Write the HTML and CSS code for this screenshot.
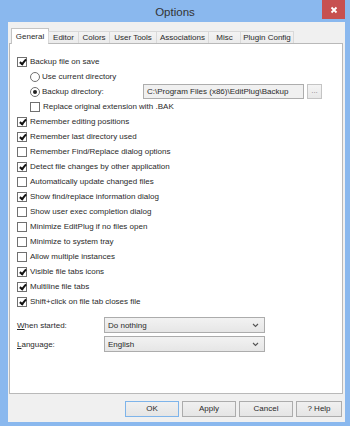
FILE: index.html
```html
<!DOCTYPE html>
<html lang="en">
<head>
  <meta charset="UTF-8" />
  <title>Options</title>
  <link rel="stylesheet" href="styles.css">
</head>
<body>
  <div class="window">
    <div class="titlebar">
      <span></span>
      <span class="title">Options</span>
      <span class="close">
        <svg width="8" height="8" viewBox="0 0 8 8"><path d="M1.5 1.5l5 5M6.5 1.5l-5 5" stroke="#fff" stroke-width="1.8"/></svg>
      </span>
    </div>

    <div class="client">
      <div class="tabs">
        <div class="tab active w-general">General</div>
        <div class="tab w-editor">Editor</div>
        <div class="tab w-colors">Colors</div>
        <div class="tab w-tools">User Tools</div>
        <div class="tab w-assoc">Associations</div>
        <div class="tab w-misc">Misc</div>
        <div class="tab w-plugin">Plugin Config</div>
      </div>

      <div class="panel">
        <div class="row"><span class="check on"></span>Backup file on save</div>
        <div class="row indent"><span class="radio"></span>Use current directory</div>
        <div class="row indent">
          <span class="radio on"></span>
          <span class="dir-label">Backup directory:</span>
          <span class="textbox">C:\Program Files (x86)\EditPlug\Backup</span>
          <span class="browse">...</span>
        </div>
        <div class="row indent"><span class="check"></span>Replace original extension with .BAK</div>
        <div class="row"><span class="check on"></span>Remember editing positions</div>
        <div class="row"><span class="check on"></span>Remember last directory used</div>
        <div class="row"><span class="check"></span>Remember Find/Replace dialog options</div>
        <div class="row"><span class="check on"></span>Detect file changes by other application</div>
        <div class="row"><span class="check"></span>Automatically update changed files</div>
        <div class="row"><span class="check on"></span>Show find/replace information dialog</div>
        <div class="row"><span class="check"></span>Show user exec completion dialog</div>
        <div class="row"><span class="check"></span>Minimize EditPlug if no files open</div>
        <div class="row"><span class="check"></span>Minimize to system tray</div>
        <div class="row"><span class="check"></span>Allow multiple instances</div>
        <div class="row"><span class="check on"></span>Visible file tabs icons</div>
        <div class="row"><span class="check on"></span>Multiline file tabs</div>
        <div class="row"><span class="check on"></span>Shift+click on file tab closes file</div>

        <div class="fields">
          <div class="field">
            <span class="field-label"><u>W</u>hen started:</span>
            <span class="combo">Do nothing
              <svg width="7" height="5" viewBox="0 0 7 5"><path d="M1 1l2.5 2.5L6 1" stroke="#555" stroke-width="1.1" fill="none"/></svg>
            </span>
          </div>
          <div class="field">
            <span class="field-label"><u>L</u>anguage:</span>
            <span class="combo">English
              <svg width="7" height="5" viewBox="0 0 7 5"><path d="M1 1l2.5 2.5L6 1" stroke="#555" stroke-width="1.1" fill="none"/></svg>
            </span>
          </div>
        </div>
      </div>

      <div class="buttons">
        <span class="btn default">OK</span>
        <span class="btn">Apply</span>
        <span class="btn">Cancel</span>
        <span class="btn help">? Help</span>
      </div>
    </div>
  </div>
</body>
</html>
```

FILE: styles.css
```css
body {
  margin: 0;
  font-family: "Liberation Sans", Arial, sans-serif;
  font-size: 8px;
  color: #2a2a2a;
}
.window {
  width: 350px;
  height: 426px;
  background-color: #8ab8ee;
  display: flex;
  flex-direction: column;
}
.titlebar {
  height: 22px;
  display: grid;
  grid-template-columns: 1fr auto 1fr;
  align-items: start;
}
.title {
  font-size: 11.5px;
  color: #333;
  line-height: 24px;
}
.close {
  justify-self: end;
  margin-right: 5px;
  width: 23px;
  height: 19px;
  background-color: #c75050;
  display: flex;
  align-items: center;
  justify-content: center;
}
.client {
  flex: 1;
  margin: 0 5px 4px 8px;
  background-color: #f0f0f0;
  padding: 6px 2px 0 1px;
  display: flex;
  flex-direction: column;
}

/* tabs */
.tabs {
  display: flex;
  align-items: flex-end;
  height: 15px;
  padding-left: 2px;
  position: relative;
  z-index: 1;
}
.tab {
  box-sizing: border-box;
  height: 12px;
  margin-left: -1px;
  border: 1px solid #d9d9d9;
  border-bottom: none;
  background: linear-gradient(#f3f3f3, #ebebeb);
  text-align: center;
  line-height: 12px;
}
.tab:first-child {
  margin-left: 0;
}
.tab.active {
  height: 16px;
  margin-bottom: -1px;
  background: #fff;
  border-color: #c4c4c4;
  line-height: 15px;
}
.w-general { width: 38px; }
.w-editor { width: 31px; }
.w-colors { width: 32px; }
.w-tools { width: 48px; }
.w-assoc { width: 53px; }
.w-misc { width: 33px; }
.w-plugin { width: 54px; }

/* panel */
.panel {
  box-sizing: border-box;
  height: 351px;
  border: 1px solid #b9b9b9;
  background-color: #fff;
  padding: 10px 0 0 7px;
}
.row {
  display: flex;
  align-items: center;
  height: 15px;
  white-space: nowrap;
}
.indent {
  padding-left: 13px;
}
.check,
.radio {
  box-sizing: border-box;
  width: 10px;
  height: 10px;
  margin-right: 3px;
  border: 1px solid #707070;
  background-color: #fff;
  position: relative;
  flex: none;
}
.radio {
  border-radius: 50%;
  margin-right: 2px;
}
.check.on::after {
  content: "";
  position: absolute;
  left: 2.5px;
  top: 0px;
  width: 2px;
  height: 5px;
  border-right: 2px solid #111;
  border-bottom: 2px solid #111;
  transform: rotate(40deg);
}
.radio.on::after {
  content: "";
  position: absolute;
  left: 2px;
  top: 2px;
  width: 4px;
  height: 4px;
  border-radius: 50%;
  background-color: #222;
}
.dir-label {
  width: 101px;
}
.textbox {
  box-sizing: border-box;
  width: 161px;
  height: 15px;
  border: 1px solid #adadad;
  background-color: #f0f0f0;
  padding-left: 3px;
  line-height: 13px;
}
.browse {
  box-sizing: border-box;
  width: 15px;
  height: 15px;
  margin-left: 3px;
  border: 1px solid #c4c4c4;
  background: linear-gradient(#f4f4f4, #e8e8e8);
  color: #888;
  text-align: center;
  line-height: 12px;
}
.fields {
  margin-top: 8px;
  display: flex;
  flex-direction: column;
  gap: 3px;
}
.field {
  display: flex;
  align-items: center;
  height: 16px;
}
.field-label {
  width: 87px;
}
.combo {
  box-sizing: border-box;
  width: 161px;
  height: 16px;
  border: 1px solid #acacac;
  background: linear-gradient(#f2f2f2, #e6e6e6);
  padding: 0 5px 0 3px;
  display: flex;
  align-items: center;
  justify-content: space-between;
}

/* buttons */
.buttons {
  display: flex;
  justify-content: flex-end;
  gap: 3px;
  margin-top: 7px;
  padding-right: 1px;
}
.btn {
  box-sizing: border-box;
  width: 54px;
  height: 16px;
  border: 1px solid #acacac;
  background: linear-gradient(#f0f0f0, #e5e5e5);
  text-align: center;
  line-height: 14px;
}
.btn.default {
  border-color: #7eb4ea;
}
.btn.help {
  width: 46px;
}
```
